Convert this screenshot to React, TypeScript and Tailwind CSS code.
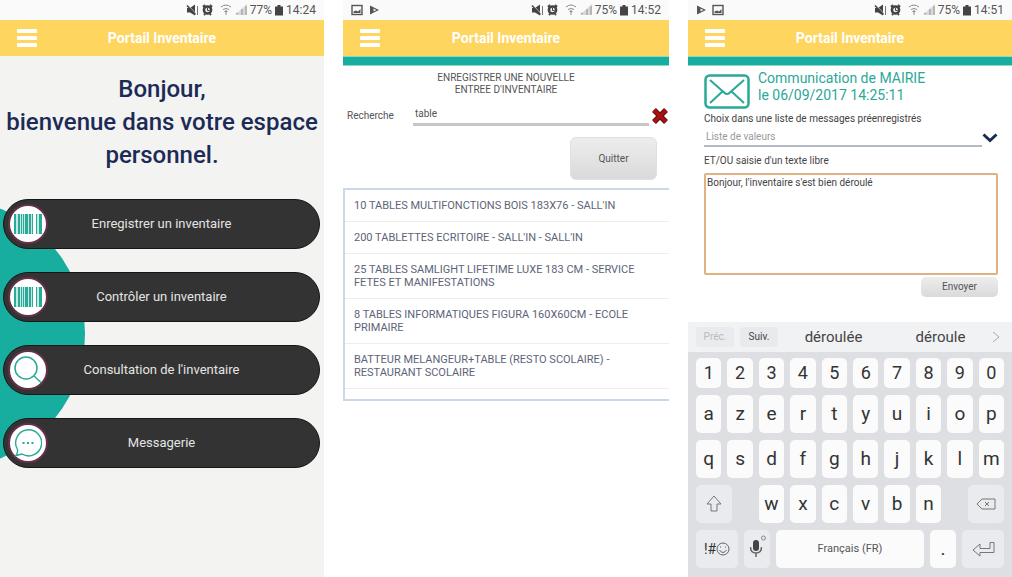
import { ReactNode, useState } from "react";

const menu = [
  { label: "Enregistrer un inventaire", icon: <BarcodeIcon /> },
  { label: "Contrôler un inventaire", icon: <BarcodeIcon /> },
  { label: "Consultation de l'inventaire", icon: <SearchIcon /> },
  { label: "Messagerie", icon: <ChatIcon /> },
];

const results = [
  "10 TABLES MULTIFONCTIONS BOIS 183X76 - SALL'IN",
  "200 TABLETTES ECRITOIRE - SALL'IN - SALL'IN",
  "25 TABLES SAMLIGHT LIFETIME LUXE 183 CM - SERVICE FETES ET MANIFESTATIONS",
  "8 TABLES INFORMATIQUES FIGURA 160X60CM - ECOLE PRIMAIRE",
  "BATTEUR MELANGEUR+TABLE (RESTO SCOLAIRE) - RESTAURANT SCOLAIRE",
];

function BarcodeIcon() {
  return (
    <svg viewBox="0 0 28 20" className="h-5 w-7" fill="#2aa898">
      <rect x="0" y="0" width="28" height="20" fill="#c4e8e2" />
      <rect x="0" y="0" width="2" height="20" />
      <rect x="4" y="0" width="2" height="20" />
      <rect x="7" y="0" width="1" height="20" />
      <rect x="9" y="0" width="1" height="20" />
      <rect x="11" y="0" width="3" height="20" />
      <rect x="15" y="0" width="2" height="20" />
      <rect x="18" y="0" width="1" height="20" />
      <rect x="19" y="0" width="3" height="20" fill="#fff" />
      <rect x="22" y="0" width="1" height="20" />
      <rect x="25" y="0" width="3" height="20" />
    </svg>
  );
}

function SearchIcon() {
  return (
    <svg viewBox="0 0 28 28" className="size-7" fill="none" stroke="#2aa898" strokeWidth="1.5">
      <circle cx="12" cy="12" r="11" />
      <path d="M20 20l7 6.500" />
    </svg>
  );
}

function ChatIcon() {
  return (
    <svg viewBox="0 0 28 28" className="size-7" fill="none" stroke="#2aa898" strokeWidth="1.4">
      <path d="M3.500 20.500A13 13 0 1 1 8 25L2 26.500Q4 24 3.500 20.500z" />
      <path d="M8.500 14h2M13 14h2M17.500 14h2" strokeWidth="1.8" />
    </svg>
  );
}

function MuteIcon() {
  return (
    <svg viewBox="0 0 13 12" className="h-3 w-[13px]" fill="#444">
      <path d="M1 4h3l5-3.500v11L4 8.500H1z" />
      <path d="M1 1.500l8.500 9" stroke="#444" strokeWidth="1.500" />
      <path d="M2 1l8 8.500" stroke="#ddd" strokeWidth="0.7" />
      <path d="M11.500 2v9" stroke="#777" strokeWidth="1" />
    </svg>
  );
}

function AlarmIcon() {
  return (
    <svg viewBox="0 0 11 12" className="h-3 w-[11px]">
      <path d="M1 3l2-2M10 3L8 1M2 11l1-1M9 11l-1-1" stroke="#444" strokeWidth="2" />
      <circle cx="5.500" cy="6" r="3.600" fill="#eee" stroke="#444" strokeWidth="2.500" />
      <path d="M5.500 4v2.500h2" fill="none" stroke="#444" />
    </svg>
  );
}

function WifiIcon() {
  return (
    <svg viewBox="0 0 12 12" className="size-3" fill="none" stroke="#8a8a8a">
      <path d="M1 3q5-4 10 0M3 5.500q3-2 6 0" />
      <path d="M6 6v5M4.500 7.500h3" />
    </svg>
  );
}

function SignalIcon() {
  return (
    <svg viewBox="0 0 12 12" className="size-3">
      <path d="M0 11L12 0v11z" fill="#d8d8d8" />
      <path d="M1 9.500h2M7 5v6M11 2v9" stroke="#aaa" strokeWidth="1.500" />
    </svg>
  );
}

function BatteryIcon() {
  return (
    <svg viewBox="0 0 8 12" className="h-3 w-2" fill="#444">
      <path d="M2.500 1h3v1.500H8V11.500H0V2.500h2.500z" />
    </svg>
  );
}

function PictureIcon() {
  return (
    <svg viewBox="0 0 12 12" className="size-3" fill="none" stroke="#555">
      <rect x="1" y="1.500" width="10" height="9" strokeWidth="1.400" />
      <path d="M2.500 9V7.500l2.500-1 2 1 2.500-2.500V9z" fill="#555" stroke="none" />
    </svg>
  );
}

function PlayIcon() {
  return (
    <svg viewBox="0 0 10 12" className="h-3 w-[10px]" fill="#555">
      <path d="M1 1.500L10 6 1 10.500z" />
      <path d="M4.500 4.500v3l3-1.500z" fill="#eee" />
    </svg>
  );
}

function StatusBar({ battery, time, children }: { battery: string; time: string; children?: ReactNode }) {
  return (
    <div className="flex h-5 items-center justify-between bg-[#fafafa] px-2 text-[12px] leading-5 text-[#555]">
      <div className="flex items-center gap-1.5">{children}</div>
      <div className="flex items-center gap-[3px]">
        <MuteIcon />
        <AlarmIcon />
        <span className="w-px" />
        <WifiIcon />
        <SignalIcon />
        <span>{battery}</span>
        <BatteryIcon />
        <span>{time}</span>
      </div>
    </div>
  );
}

function Header() {
  return (
    <header className="grid h-9 grid-cols-[36px_1fr_36px] items-center bg-[#fed55f] px-[17px]">
      <button aria-label="Menu" className="flex w-5 flex-col gap-[3px]">
        <span className="h-1 rounded-[1px] bg-white" />
        <span className="h-1 rounded-[1px] bg-white" />
        <span className="h-1 rounded-[1px] bg-white" />
      </button>
      <h2 className="text-center text-[14px] leading-5 font-bold text-white">Portail Inventaire</h2>
    </header>
  );
}

function HomeScreen() {
  return (
    <section className="flex min-w-0 flex-col bg-[#f3f3f2]">
      <StatusBar battery="77%" time="14:24" />
      <Header />
      <h1 className="pt-[17px] text-center text-[24px] leading-[33px] font-medium text-[#1c2b56]">
        Bonjour,
        <br />
        bienvenue dans votre espace
        <br />
        personnel.
      </h1>
      <div className="relative mt-[27px] flex grow flex-col gap-[23px] overflow-hidden pr-1 pl-[3px]">
        <div className="absolute top-0 -left-[184px] size-[269px] rounded-full bg-[#17ae9f]" />
        {menu.map((item) => (
          <button
            key={item.label}
            className="relative grid h-[50px] grid-cols-[48px_1fr_48px] items-center rounded-full border border-[#161616] bg-[#333] text-[13px] leading-4 text-[#e4e4e4]"
          >
            <span className="flex size-10 items-center justify-center justify-self-center rounded-full border-2 border-[#64304a] bg-white">
              {item.icon}
            </span>
            {item.label}
          </button>
        ))}
      </div>
    </section>
  );
}

function SearchScreen() {
  const [query, setQuery] = useState("table");

  return (
    <section className="flex min-w-0 flex-col bg-white">
      <StatusBar battery="75%" time="14:52">
        <PictureIcon />
        <PlayIcon />
      </StatusBar>
      <Header />
      <div className="h-[10px] border-y border-[#8fd8c8] bg-[#17ae9f]" />
      <h3 className="pt-1.5 text-center text-[10px] leading-3 text-[#555]">
        ENREGISTRER UNE NOUVELLE
        <br />
        ENTREE D'INVENTAIRE
      </h3>
      <div className="mt-2.5 flex items-center pl-1">
        <label htmlFor="recherche" className="w-[66px] text-[10px] leading-4 text-[#555]">
          Recherche
        </label>
        <input
          id="recherche"
          value={query}
          onChange={(e) => setQuery(e.target.value)}
          className="h-5 min-w-0 grow border-b-[3px] border-[#c6c6c6] pb-0.5 pl-0.5 text-[10px] leading-4 text-[#555] outline-none"
        />
        <button aria-label="Effacer" onClick={() => setQuery("")} className="ml-0.5">
          <svg viewBox="0 0 18 18" className="size-[18px]">
            <path d="M3 3l12 12M15 3L3 15" stroke="#650c0c" strokeWidth="5.500" />
            <path d="M3 3l12 12M15 3L3 15" stroke="#a51212" strokeWidth="3.500" />
          </svg>
        </button>
      </div>
      <button className="mt-[11px] mr-3 h-[43px] w-[87px] self-end rounded-md border border-[#e0e0e0] bg-linear-to-b from-[#ededed] to-[#dadada] text-[10px] leading-4 text-[#555]">
        Quitter
      </button>
      <ul className="mt-2 border-y-2 border-l-2 border-[#cbd8ea] pb-2.5 text-[11px] leading-[13px] text-[#5d6478]">
        {results.map((r) => (
          <li key={r} className="border-b border-[#ededed] py-[9px] pr-5 pl-[9px]">
            {r}
          </li>
        ))}
      </ul>
    </section>
  );
}

function Key({ children, className = "bg-[#fbfbfb]", label }: { children: ReactNode; className?: string; label?: string }) {
  return (
    <button aria-label={label} className={`flex h-[38px] items-center justify-center rounded-[5px] ${className}`}>
      {children}
    </button>
  );
}

function Keyboard() {
  return (
    <div className="bg-[#dddfe3] text-[#444]">
      <div className="flex h-[30px] items-center bg-[#f1f2f4] pl-2 pr-3 text-[15px] leading-5">
        <button className="h-5 w-[38px] rounded bg-[#eaebee] text-[10px] leading-4 text-[#bbb]">Préc.</button>
        <button className="ml-1.5 h-5 w-[38px] rounded bg-[#e9eaed] text-[10px] leading-4">Suiv.</button>
        <button className="grow">déroulée</button>
        <button className="grow">déroule</button>
        <button aria-label="Plus">
          <svg viewBox="0 0 8 12" className="h-3 w-2" fill="none" stroke="#aaa">
            <path d="M1 1l6 5-6 5" />
          </svg>
        </button>
      </div>
      <div className="flex flex-col gap-[7px] px-2 pt-1.5 pb-[9px] text-[19px] leading-6 text-[#333]">
        <div className="grid grid-cols-10 gap-1.5 text-[18px]">
          {"1234567890".split("").map((k) => (
            <button key={k} className="h-[30px] rounded-[5px] bg-[#fbfbfb]">
              {k}
            </button>
          ))}
        </div>
        {["azertyuiop", "qsdfghjklm"].map((row) => (
          <div key={row} className="grid grid-cols-10 gap-1.5">
            {row.split("").map((k) => (
              <Key key={k}>{k}</Key>
            ))}
          </div>
        ))}
        <div className="grid grid-cols-10 gap-1.5">
          <Key label="Majuscule" className="-mr-[11px] bg-[#eaebee]">
            <svg viewBox="0 0 16 18" className="h-[18px] w-4" fill="none" stroke="#777">
              <path d="M8 1l7 8h-4v7H5V9H1z" />
            </svg>
          </Key>
          <span />
          {"wxcvbn".split("").map((k) => (
            <Key key={k}>{k}</Key>
          ))}
          <span />
          <Key label="Supprimer" className="-ml-[11px] bg-[#eaebee]">
            <svg viewBox="0 0 20 12" className="h-3 w-5" fill="none" stroke="#777">
              <path d="M6 1h13v10H6L1 6zM9 4l4 4M13 4L9 8" />
            </svg>
          </Key>
        </div>
        <div className="flex gap-1.5">
          <Key label="Symboles" className="w-[42px] bg-[#eaebee]">
            <span className="text-[14px]">!#</span>
            <svg viewBox="0 0 14 14" className="size-[14px]" fill="none" stroke="#666">
              <circle cx="7" cy="7" r="6" />
              <path d="M3.500 8q3.500 5 7 0M4.500 4.500v1M9.500 4.500v1" />
            </svg>
          </Key>
          <Key label="Micro" className="w-[26px] bg-[#eaebee]">
            <svg viewBox="0 0 20 28" className="h-7 w-5" fill="none" stroke="#666">
              <rect x="6" y="5" width="6" height="11" rx="3" fill="#444" stroke="none" />
              <path d="M3.500 12q0 6 5.500 6t5.500-6M9 18v4" strokeWidth="1.500" />
              <circle cx="16.500" cy="3" r="2" stroke="#888" />
            </svg>
          </Key>
          <Key className="grow bg-[#fbfbfb]">
            <span className="text-[11px] leading-4 text-[#555]">Français (FR)</span>
          </Key>
          <Key className="w-[26px] bg-[#fbfbfb]">.</Key>
          <Key label="Entrée" className="w-[42px] bg-[#eaebee]">
            <svg viewBox="0 0 23 16" className="h-4 w-[23px]" fill="none" stroke="#777">
              <path d="M18 1.500h4v10H8V15L1 9l7-6v4.500h10z" />
            </svg>
          </Key>
        </div>
      </div>
    </div>
  );
}

function MessageScreen() {
  const [text, setText] = useState("Bonjour, l'inventaire s'est bien déroulé");

  return (
    <section className="flex min-w-0 flex-col bg-white">
      <StatusBar battery="75%" time="14:51">
        <PlayIcon />
        <PictureIcon />
      </StatusBar>
      <Header />
      <div className="h-[10px] border-y border-[#8fd8c8] bg-[#17ae9f]" />
      <div className="flex flex-col pt-1 pr-[14px] pl-4">
        <div className="flex items-start gap-2 text-[#2aa898]">
          <svg viewBox="0 0 46 35" className="mt-1 h-[35px] w-[46px]" fill="none" stroke="#2aa898" strokeWidth="2.500">
            <rect x="1.500" y="1.500" width="43" height="32" rx="4" />
            <path d="M6 6l13.500 12q3.500 4 7 0L40 6M6 29l13-12M40 29L27 17" strokeWidth="2" />
          </svg>
          <p className="text-[14px] leading-[17px]">
            Communication de MAIRIE
            <br />
            le 06/09/2017 14:25:11
          </p>
        </div>
        <label htmlFor="messages" className="mt-1 text-[10px] leading-3 text-[#444]">
          Choix dans une liste de messages préenregistrés
        </label>
        <div className="relative mt-1 flex">
          <select
            id="messages"
            className="mr-4 h-[18px] grow appearance-none border-b-2 border-[#b4bac4] pl-0.5 text-[10px] leading-4 text-[#999] outline-none"
          >
            <option>Liste de valeurs</option>
          </select>
          <svg viewBox="0 0 16 10" className="pointer-events-none absolute top-1 right-0 h-[10px] w-4" fill="none" stroke="#1c2b56" strokeWidth="3">
            <path d="M1.500 1.500L8 7.500l6.500-6" />
          </svg>
        </div>
        <label htmlFor="texte" className="mt-2 text-[10px] leading-3 text-[#444]">
          ET/OU saisie d'un texte libre
        </label>
        <textarea
          id="texte"
          value={text}
          onChange={(e) => setText(e.target.value)}
          className="mt-1.5 h-[102px] resize-none rounded-[2px] border-2 border-[#e0b183] px-px py-0.5 text-[10px] leading-3 text-[#444] outline-none"
        />
        <button className="mt-0.5 h-5 w-[77px] self-end rounded-[5px] bg-linear-to-b from-[#ededed] to-[#dadada] text-[10px] leading-4 text-[#555]">
          Envoyer
        </button>
      </div>
      <div className="mt-auto">
        <Keyboard />
      </div>
    </section>
  );
}

export default function App() {
  return (
    <main className="grid min-h-screen grid-cols-[324fr_326fr_324fr] gap-[19px] bg-white font-['Roboto',sans-serif]">
      <HomeScreen />
      <SearchScreen />
      <MessageScreen />
    </main>
  );
}
